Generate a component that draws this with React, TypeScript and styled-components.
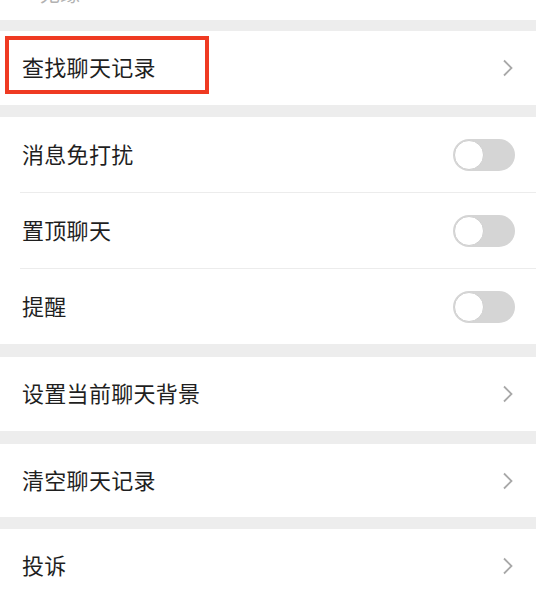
import { useState } from 'react';
import styled, { createGlobalStyle } from 'styled-components';

const GlobalStyle = createGlobalStyle`
  html, body {
    margin: 0;
    padding: 0;
    background: #ededed;
    font-family: "Noto Sans CJK SC", "Noto Sans", sans-serif;
  }
`;

// --- Estilos ---
const Page = styled.div`
  width: 536px;
  height: 600px;
  overflow: hidden;
  background: #ededed;
`;

const TopStrip = styled.div`
  height: 20px;
  background: #fff;
  overflow: hidden;
  padding-left: 40px;
`;

const CutName = styled.div`
  margin-top: -17px;
  font-size: 20px;
  line-height: 22px;
  color: #b2b2b2;
`;

const Group = styled.div<{ $gap: number }>`
  background: #fff;
  margin-top: ${({ $gap }) => $gap}px;
`;

const Row = styled.div<{ $h: number }>`
  position: relative;
  display: flex;
  align-items: center;
  justify-content: space-between;
  height: ${({ $h }) => $h}px;
  padding: 0 22px 0 22px;
  & + & {
    border-top: 1px solid #ececec;
    margin-left: 20px;
    padding-left: 2px;
  }
`;

const Label = styled.span`
  font-size: 22px;
  line-height: 1;
  padding-bottom: 4px;
  color: #1f1f1f;
  letter-spacing: 0.3px;
`;

const Highlight = styled.div`
  position: absolute;
  left: 5px;
  top: 5px;
  width: 196px;
  height: 50px;
  border: 4px solid #ef3a22;
`;

const Chevron = styled.svg`
  width: 12px;
  height: 18px;
  margin-right: 0px;
`;

const Track = styled.button<{ $on: boolean }>`
  position: relative;
  width: 62px;
  height: 32px;
  border: none;
  border-radius: 16px;
  padding: 0;
  background: ${({ $on }) => ($on ? '#07c160' : '#d5d5d5')};
  cursor: pointer;
  margin-right: -1px;
`;

const Knob = styled.span<{ $on: boolean }>`
  position: absolute;
  top: 1px;
  left: ${({ $on }) => ($on ? '31px' : '1px')};
  width: 30px;
  height: 30px;
  box-sizing: border-box;
  border-radius: 50%;
  background: #fff;
  border: 1px solid #cfcfcf;
`;

const Arrow = () => (
  <Chevron viewBox="0 0 12 18">
    <path d="M2 1.5 L9.5 9 L2 16.5" fill="none" stroke="#a8a8a8" strokeWidth="1.8" />
  </Chevron>
);

const Toggle = ({ on, onClick }: { on: boolean; onClick: () => void }) => (
  <Track $on={on} onClick={onClick}>
    <Knob $on={on} />
  </Track>
);

export default function App() {
  const [toggles, setToggles] = useState([false, false, false]);
  const flip = (i: number) => setToggles(t => t.map((v, j) => (j === i ? !v : v)));
  const switches = ['消息免打扰', '置顶聊天', '提醒'];

  return (
    <Page>
      <GlobalStyle />
      <TopStrip>
        <CutName>无缘</CutName>
      </TopStrip>
      <Group $gap={11}>
        <Row $h={74}>
          <Label>查找聊天记录</Label>
          <Arrow />
          <Highlight />
        </Row>
      </Group>
      <Group $gap={12}>
        {switches.map((s, i) => (
          <Row key={s} $h={75}>
            <Label>{s}</Label>
            <Toggle on={toggles[i]} onClick={() => flip(i)} />
          </Row>
        ))}
      </Group>
      <Group $gap={13}>
        <Row $h={74}>
          <Label>设置当前聊天背景</Label>
          <Arrow />
        </Row>
      </Group>
      <Group $gap={13}>
        <Row $h={73}>
          <Label>清空聊天记录</Label>
          <Arrow />
        </Row>
      </Group>
      <Group $gap={12}>
        <Row $h={74}>
          <Label>投诉</Label>
          <Arrow />
        </Row>
      </Group>
    </Page>
  );
}
